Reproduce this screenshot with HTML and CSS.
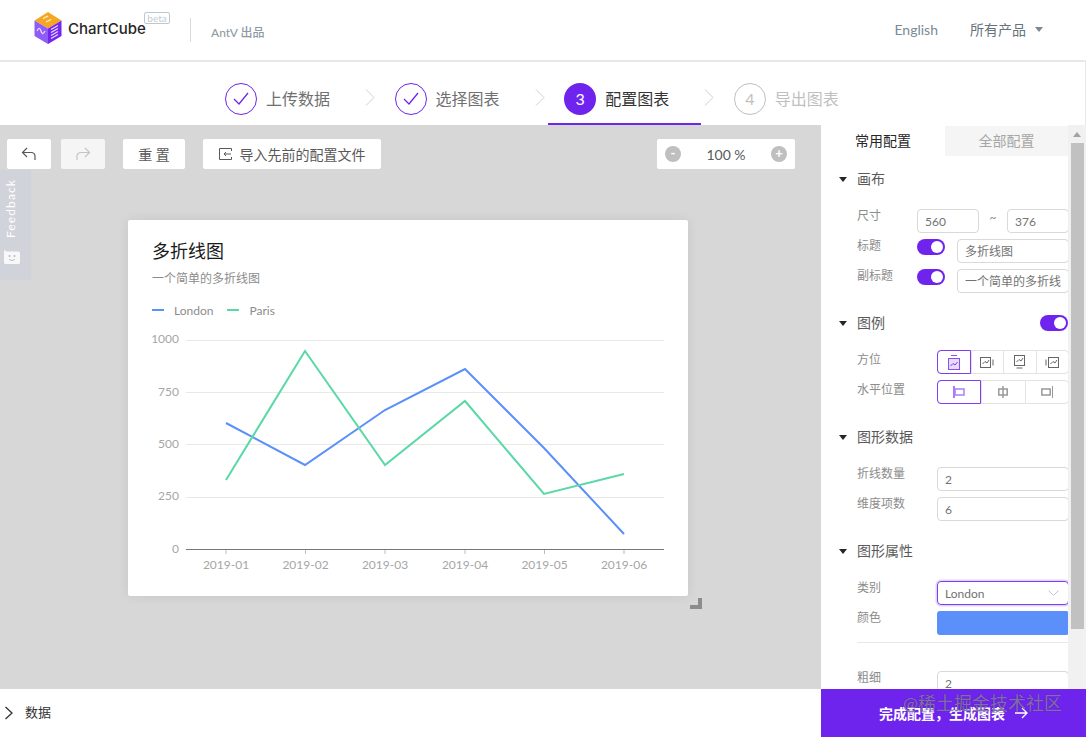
FILE: index.html
```html
<!DOCTYPE html>
<html lang="zh">
<head>
<meta charset="utf-8">
<title>ChartCube</title>
<link rel="stylesheet" href="styles.css">
</head>
<body>
<header class="header">
  <svg class="logo" width="28" height="32" viewBox="0 0 28 32">
    <path d="M14 0 27.500 8.500 14 16.500.5 8.500z" fill="#f5a623"/>
    <path d="M.5 8.500 14 16.500V32L.5 24z" fill="#8f5cf7"/>
    <path d="M27.500 8.500 14 16.500V32l13.500-8z" fill="#7326ee"/>
    <path d="M9 6.500l5-2.500M12 10l5-2.500" stroke="#fff3d6" stroke-width="1.300" fill="none"/>
    <path d="M3 19c2-4 3-3 4 0s2 4 4 0" stroke="#e8dcff" stroke-width="1.300" fill="none"/>
    <path d="M17 17.500l7-4M17 20.500l7-4M17 23.500l7-4M17 26.500l7-4" stroke="#e8dcff" stroke-width="1.200" fill="none"/>
  </svg>
  <span class="brand">ChartCube</span>
  <span class="beta">beta</span>
  <span class="divider"></span>
  <span class="antv">AntV 出品</span>
  <span class="nav-en">English</span>
  <span class="nav-all">所有产品</span>
  <span class="caret nav-caret"></span>
</header>

<nav class="steps">
  <div class="step">
    <span class="circle circle-done"><svg width="16" height="14" viewBox="0 0 16 14"><path d="M1 7l5 5L15 1" fill="none" stroke="#6f24ee" stroke-width="1.300"/></svg></span>
    <span class="step-text">上传数据</span>
  </div>
  <div class="chev"><svg width="10" height="17" viewBox="0 0 10 17"><path d="M1 .5l8 8-8 8" fill="none" stroke="#cfcfcf"/></svg></div>
  <div class="step">
    <span class="circle circle-done"><svg width="16" height="14" viewBox="0 0 16 14"><path d="M1 7l5 5L15 1" fill="none" stroke="#6f24ee" stroke-width="1.300"/></svg></span>
    <span class="step-text">选择图表</span>
  </div>
  <div class="chev"><svg width="10" height="17" viewBox="0 0 10 17"><path d="M1 .5l8 8-8 8" fill="none" stroke="#cfcfcf"/></svg></div>
  <div class="step step-active">
    <span class="circle circle-active">3</span>
    <span class="step-text">配置图表</span>
  </div>
  <div class="chev"><svg width="10" height="17" viewBox="0 0 10 17"><path d="M1 .5l8 8-8 8" fill="none" stroke="#cfcfcf"/></svg></div>
  <div class="step step-todo">
    <span class="circle circle-todo">4</span>
    <span class="step-text">导出图表</span>
  </div>
</nav>

<main class="main">
  <section class="stage">
    <div class="toolbar">
      <button class="tool tool-icon"><svg width="16" height="14" viewBox="0 0 16 14"><path d="M6 1 1.500 5.500 6 10M1.500 5.500H10c2.500 0 4 1.500 4 4V13" fill="none" stroke="#595959" stroke-width="1.200"/></svg></button>
      <button class="tool tool-icon tool-off"><svg width="16" height="14" viewBox="0 0 16 14"><path d="M10 1l4.500 4.500L10 10M14.500 5.500H6c-2.500 0-4 1.500-4 4V13" fill="none" stroke="#c4c4c4" stroke-width="1.200"/></svg></button>
      <button class="tool tool-reset">重 置</button>
      <button class="tool tool-import"><svg width="13" height="12" viewBox="0 0 13 12"><path d="M12.500 3V.5H.5v11h12V9M12 6H5M7 4 5 6l2 2" fill="none" stroke="#595959"/></svg>导入先前的配置文件</button>
      <div class="zoombox">
        <span class="zoom-btn">-</span>
        <span class="zoom-val">100 %</span>
        <span class="zoom-btn">+</span>
      </div>
    </div>

    <div class="card">
      <div class="chart-title">多折线图</div>
      <div class="chart-sub">一个简单的多折线图</div>
      <div class="legend">
        <span class="mark mark-blue"></span><span class="legend-text">London</span>
        <span class="mark mark-green"></span><span class="legend-text">Paris</span>
      </div>
      <svg class="plot" width="560" height="376" viewBox="128 220 560 376">
        <g stroke="#e8e8e8">
          <path d="M186 340.500H664M186 392.500H664M186 444.500H664M186 497.500H664"/>
        </g>
        <path d="M186 549.500H664" stroke="#777"/>
        <path d="M226 550v4M305.500 550v4M385 550v4M465 550v4M544.500 550v4M624 550v4" stroke="#bbb"/>
        <g class="axis" text-anchor="end">
          <text x="179" y="343">1000</text>
          <text x="179" y="396">750</text>
          <text x="179" y="448">500</text>
          <text x="179" y="500">250</text>
          <text x="179" y="553">0</text>
        </g>
        <g class="axis" text-anchor="middle">
          <text x="226" y="569">2019-01</text>
          <text x="305.500" y="569">2019-02</text>
          <text x="385" y="569">2019-03</text>
          <text x="465" y="569">2019-04</text>
          <text x="544.500" y="569">2019-05</text>
          <text x="624" y="569">2019-06</text>
        </g>
        <polyline points="226,423 305,465 385,410 465,369 544,448 624,534" fill="none" stroke="#5b8ff9" stroke-width="2"/>
        <polyline points="226,480 305,351 385,465 465,401 544,494 624,474" fill="none" stroke="#5ad8a6" stroke-width="2"/>
      </svg>
      <span class="handle"></span>
    </div>

    <aside class="feedback">
      <span class="feedback-text">Feedback</span>
      <svg width="18" height="16" viewBox="0 0 18 16"><path d="M1 1l3 1.500h11q2 0 2 2v9.500q0 1-2 1H3q-2 0-2-1z" fill="#f8f8f9"/><circle cx="6.500" cy="7" r="1.100" fill="#b9bfc8"/><circle cx="11.500" cy="7" r="1.100" fill="#b9bfc8"/><path d="M6 10.500q3 2 6 0" fill="none" stroke="#b9bfc8"/></svg>
    </aside>
  </section>

  <section class="side">
    <div class="side-col">
      <div class="tabs">
        <span class="tab tab-on">常用配置</span>
        <span class="tab tab-off">全部配置</span>
      </div>

      <div class="sec sec-first">
        <div class="sec-head"><span class="caret"></span><span>画布</span></div>
        <div class="rows">
          <div class="row row-narrow"><span class="lab">尺寸</span><span class="inp inp-size">560</span><span class="tilde">~</span><span class="inp inp-size">376</span></div>
          <div class="row row-narrow"><span class="lab">标题</span><span class="toggle"></span><span class="inp inp-grow">多折线图</span></div>
          <div class="row row-narrow"><span class="lab">副标题</span><span class="toggle"></span><span class="inp inp-grow">一个简单的多折线</span></div>
        </div>
      </div>

      <div class="sec">
        <div class="sec-head"><span class="caret"></span><span>图例</span><span class="toggle toggle-end"></span></div>
        <div class="rows rows-tight">
          <div class="row"><span class="lab lab-low">方位</span>
            <div class="seg">
              <span class="seg-item seg-on"><svg width="12" height="15" viewBox="0 0 12 15"><path d="M3 .5h6" stroke="#8a4ff0"/><rect x=".5" y="3.500" width="11" height="11" fill="#e6dbfb" stroke="#8a4ff0"/><path d="M2.500 11l2.500-2.500 2 1.500 2.500-3" fill="none" stroke="#7a3aee"/></svg></span>
              <span class="seg-item"><svg width="14" height="11" viewBox="0 0 14 11"><rect x=".5" y=".5" width="10" height="10" fill="none" stroke="#666"/><path d="M2.500 7l2.500-2.500 2 1.500 2-3" fill="none" stroke="#666"/><path d="M13 2.500v6" stroke="#666"/></svg></span>
              <span class="seg-item"><svg width="11" height="14" viewBox="0 0 11 14"><rect x=".5" y=".5" width="10" height="10" fill="none" stroke="#666"/><path d="M2.500 7l2.500-2.500 2 1.500 2-3" fill="none" stroke="#666"/><path d="M2.500 13h6" stroke="#666"/></svg></span>
              <span class="seg-item"><svg width="14" height="11" viewBox="0 0 14 11"><rect x="3.500" y=".5" width="10" height="10" fill="none" stroke="#666"/><path d="M5.500 7l2.500-2.500 2 1.500 2-3" fill="none" stroke="#666"/><path d="M1 2.500v6" stroke="#666"/></svg></span>
            </div>
          </div>
          <div class="row"><span class="lab lab-low">水平位置</span>
            <div class="seg">
              <span class="seg-item seg-on"><svg width="12" height="12" viewBox="0 0 12 12"><path d="M1 0v12" stroke="#a97ff5" stroke-width="2"/><rect x="2" y="3" width="9" height="6" fill="none" stroke="#a97ff5" stroke-width="1.500"/></svg></span>
              <span class="seg-item"><svg width="10" height="12" viewBox="0 0 10 12"><path d="M5 0v12" stroke="#999" stroke-width="1.500"/><rect x=".8" y="3" width="8.400" height="6" fill="none" stroke="#999" stroke-width="1.500"/></svg></span>
              <span class="seg-item"><svg width="12" height="12" viewBox="0 0 12 12"><path d="M11.500 0v12" stroke="#999"/><rect x=".8" y="3" width="8.400" height="6" fill="none" stroke="#999" stroke-width="1.500"/></svg></span>
            </div>
          </div>
        </div>
      </div>

      <div class="sec sec-data">
        <div class="sec-head"><span class="caret"></span><span>图形数据</span></div>
        <div class="rows">
          <div class="row"><span class="lab">折线数量</span><span class="inp inp-grow">2</span></div>
          <div class="row"><span class="lab">维度项数</span><span class="inp inp-grow">6</span></div>
        </div>
      </div>

      <div class="sec">
        <div class="sec-head"><span class="caret"></span><span>图形属性</span></div>
        <div class="rows">
          <div class="row"><span class="lab">类别</span><span class="inp inp-grow inp-select">London<svg width="11" height="6" viewBox="0 0 11 6"><path d="M.5.5l5 5 5-5" fill="none" stroke="#c4c4c4"/></svg></span></div>
          <div class="row"><span class="lab">颜色</span><span class="swatch"></span></div>
          <div class="rule"></div>
          <div class="row"><span class="lab">粗细</span><span class="inp inp-grow">2</span></div>
        </div>
      </div>
    </div>
    <div class="scrollbar">
      <span class="scroll-up"></span>
      <span class="thumb"></span>
    </div>
  </section>
</main>

<footer class="bottom">
  <svg width="10" height="14" viewBox="0 0 10 14"><path d="M1.500 1l6.500 6-6.500 6" fill="none" stroke="#333" stroke-width="1.300"/></svg>
  <span class="bottom-label">数据</span>
  <button class="finish">完成配置，生成图表<svg width="14" height="12" viewBox="0 0 14 12"><path d="M1 6h12M8 1l5 5-5 5" fill="none" stroke="#fff" stroke-width="1.300"/></svg></button>
  <span class="watermark">@稀土掘金技术社区</span>
</footer>
</body>
</html>
```

FILE: styles.css
```css
* { box-sizing: border-box; }
html, body { margin: 0; height: 737px; overflow: hidden; }
body {
  display: flex;
  flex-direction: column;
  background: #fff;
  font-family: Lato, "Noto Sans CJK SC", sans-serif;
  color: #595959;
}
button { font: inherit; border: 0; padding: 0; cursor: pointer; }

.header {
  height: 62px;
  flex: none;
  display: flex;
  align-items: center;
  padding-left: 34px;
  border-bottom: 2px solid #e8e8e8;
  position: relative;
}
.logo { margin-top: -4px; }
.brand { width: 78px; margin-left: 6px; margin-top: -4px; font: 500 15px Inter, sans-serif; color: #262626; white-space: nowrap; }
.beta {
  position: absolute; left: 144px; top: 12px;
  width: 26px; height: 12px;
  border: 1px solid #bcc8d0; border-radius: 2px;
  font-size: 10px; line-height: 10px; text-align: center; color: #c3ccd3;
}
.divider { width: 1px; height: 24px; background: #d9d9d9; margin-left: 44px; }
.antv { margin-left: 20px; margin-top: 2px; font-size: 12px; font-weight: 500; color: #8f9ba3; }
.nav-en { margin-left: auto; margin-top: -2px; font-size: 14px; color: #7a8a94; }
.nav-all { margin-left: 32px; margin-top: -2px; font-size: 14px; color: #66737c; }
.caret {
  display: inline-block; flex: none; width: 0; height: 0;
  border-left: 4px solid transparent; border-right: 4px solid transparent;
  border-top: 5px solid #262626;
}
.nav-caret { margin: -2px 43px 0 9px; border-top-color: #7a8a94; border-left-width: 4.500px; border-right-width: 4.500px; }

.steps {
  height: 63px; flex: none;
  display: flex;
  padding-left: 209px;
  border-right: 1px solid #e8e8e8;
}
.step {
  width: 153px; padding: 21px 0 0 16px;
  display: flex; align-items: flex-start; gap: 9px;
  font-size: 16px; line-height: 32px; color: #707070;
}
.step-active { color: #333; border-bottom: 2px solid #6f24ee; }
.step-todo { color: #bfbfbf; }
.circle {
  width: 32px; height: 32px; border-radius: 50%;
  display: flex; align-items: center; justify-content: center;
  flex: none;
}
.circle-done { border: 1px solid #6f24ee; }
.circle-active { background: #6f24ee; color: #fff; }
.circle-todo { border: 1px solid #bfbfbf; color: #bfbfbf; }
.chev { width: 16.600px; padding: 27px 0 0 3px; }

.main { flex: 1; display: flex; min-height: 0; }
.stage { flex: 1; background: #d7d7d7; position: relative; min-width: 0; }
.toolbar { display: flex; padding: 14px 0 0 7px; height: 44px; }
.tool {
  height: 30px; background: #fff; border-radius: 2px; color: #595959; font-size: 14px;
  display: flex; align-items: center; justify-content: center; padding-bottom: 1px;
}
.tool-icon { width: 44px; margin-right: 10px; }
.tool-off { background: #f5f5f5; margin-right: 18px; }
.tool-reset { width: 62px; margin-right: 18px; }
.tool-import { width: 178px; gap: 8px; }
.zoombox {
  margin-left: 276px; width: 138px; height: 30px; background: #fff; border-radius: 2px;
  display: flex; align-items: center; justify-content: space-between; padding: 0 8px;
  font-size: 14px;
}
.zoom-btn {
  width: 16px; height: 16px; border-radius: 50%; background: #bfbfbf; color: #fff;
  font-size: 13px; line-height: 15px; font-weight: 700; text-align: center;
}
.zoom-val { color: #595959; }

.card {
  position: relative;
  width: 560px; height: 376px;
  margin: 51px 0 0 128px;
  background: #fff; border-radius: 2px;
  box-shadow: 0 0 12px rgba(0, 0, 0, .08);
  padding: 18px 24px 0;
}
.chart-title { font-size: 18px; line-height: 26px; color: #1a1a1a; }
.chart-sub { margin-top: 7px; font-size: 12px; line-height: 16px; color: #8c8c8c; }
.legend { margin-top: 15px; display: flex; align-items: center; height: 16px; font-size: 12px; color: #8c8c8c; }
.mark { width: 12px; height: 2px; }
.mark-blue { background: #5b8ff9; }
.mark-green { background: #5ad8a6; margin-left: 14px; }
.legend-text { margin-left: 10px; }
.plot { position: absolute; left: 0; top: 0; }
.axis { font-size: 12px; fill: #a6a6a6; }
.handle {
  position: absolute; left: 562px; top: 378px;
  width: 12px; height: 11px;
  border-right: 4px solid #8c8c8c; border-bottom: 4px solid #8c8c8c;
}

.feedback {
  position: absolute; left: 0; top: 45px; width: 31px; height: 110px;
  background: #d0d4da;
  display: flex; flex-direction: column; align-items: flex-start; padding: 11px 0 0 3px;
}
.feedback-text {
  writing-mode: vertical-rl; transform: rotate(180deg);
  margin-left: 1px;
  color: #fff; font-size: 12px; line-height: 14px; letter-spacing: 1.100px; height: 57px;
}
.feedback svg { margin-top: 11px; }

.side { width: 265px; flex: none; display: flex; background: #fff; overflow: hidden; }
.side-col { width: 247px; flex: none; padding-top: 1px; }
.tabs { display: flex; height: 30px; font-size: 14px; line-height: 30px; text-align: center; }
.tab { width: 124px; }
.tab-on { color: #262626; }
.tab-off { background: #f5f5f5; color: #a6a6a6; width: 123px; }

.sec { margin-top: 19px; padding-left: 18px; }
.sec-first { margin-top: 12px; }
.sec-data { margin-top: 22px; }
.sec-head {
  height: 22px; display: flex; align-items: center; gap: 10px;
  font-size: 14px; line-height: 22px; color: #595959;
}
.rows { margin-top: 19px; margin-right: -1px; padding-left: 18px; display: flex; flex-direction: column; gap: 6px; }
.rows-tight { margin-top: 16px; }
.row { display: flex; align-items: flex-start; height: 24px; }
.lab { width: 80px; flex: none; font-size: 12px; line-height: 14px; color: #8c8c8c; }
.lab-low { padding-top: 3px; }
.row-narrow .lab { width: 60px; }
.inp {
  height: 24px; border: 1px solid #d9d9d9; border-radius: 4px; padding-left: 7px;
  font-size: 12px; line-height: 23px; color: #737373; white-space: nowrap; overflow: hidden;
}
.inp-size { width: 62px; }
.tilde { width: 28px; text-align: center; font-size: 12px; line-height: 18px; color: #8c8c8c; }
.inp-grow { flex: 1; min-width: 0; }
.inp-select {
  display: flex; align-items: center; justify-content: space-between; padding-right: 9px;
  border-color: #7f3df0; box-shadow: 0 0 0 1.500px #e4d4fc;
}
.toggle {
  width: 28px; height: 16px; flex: none; border-radius: 8px; background: #6f24ee; position: relative;
}
.toggle::after {
  content: ""; position: absolute; right: 2px; top: 2px;
  width: 12px; height: 12px; border-radius: 50%; background: #fff;
}
.row-narrow .toggle { margin-right: 12px; }
.toggle-end { margin-left: auto; margin-right: 0; }
.seg { flex: 1; display: flex; height: 24px; border: 1px solid #e3e3e3; border-radius: 4px; }
.seg-item {
  flex: 1; display: flex; align-items: center; justify-content: center;
  border-left: 1px solid #e3e3e3;
}
.seg-item:first-child { border-left: 0; }
.seg-on { margin: -1px 0 -1px -1px; border: 1px solid #7f3df0; border-radius: 4px 0 0 4px; }
.seg-on:first-child { border-left: 1px solid #7f3df0; }
.swatch { flex: 1; height: 24px; border-radius: 3px; background: #5b8ff9; }
.rule { height: 1px; background: #e8e8e8; margin-top: 1px; margin-bottom: 22px; }

.scrollbar { flex: 1; background: #f1f1f1; padding: 0 2px; display: flex; flex-direction: column; align-items: center; position: relative; }
.scroll-up {
  margin-top: 7px; width: 0; height: 0; flex: none;
  border-left: 4px solid transparent; border-right: 4px solid transparent;
  border-bottom: 5px solid #a3a3a3;
}
.thumb { width: 13px; height: 486px; margin-top: 6px; background: #c1c1c1; flex: none; }

.bottom { height: 48px; flex: none; display: flex; align-items: center; padding-left: 4px; position: relative; background: #fff; }
.bottom-label { margin-left: 11px; margin-top: -3px; font-size: 13px; color: #333; }
.finish {
  margin-left: auto; width: 265px; height: 48px; background: #6f24ee; color: #fff;
  font-size: 14px; font-weight: 700;
  display: flex; align-items: center; justify-content: center; gap: 9px;
}
.watermark {
  position: absolute; left: 903px; top: 1px;
  font-size: 18px; line-height: 26px; color: rgba(135, 120, 170, .9); white-space: nowrap;
  text-shadow: 0 0 1px rgba(50, 30, 90, .6);
}
```
